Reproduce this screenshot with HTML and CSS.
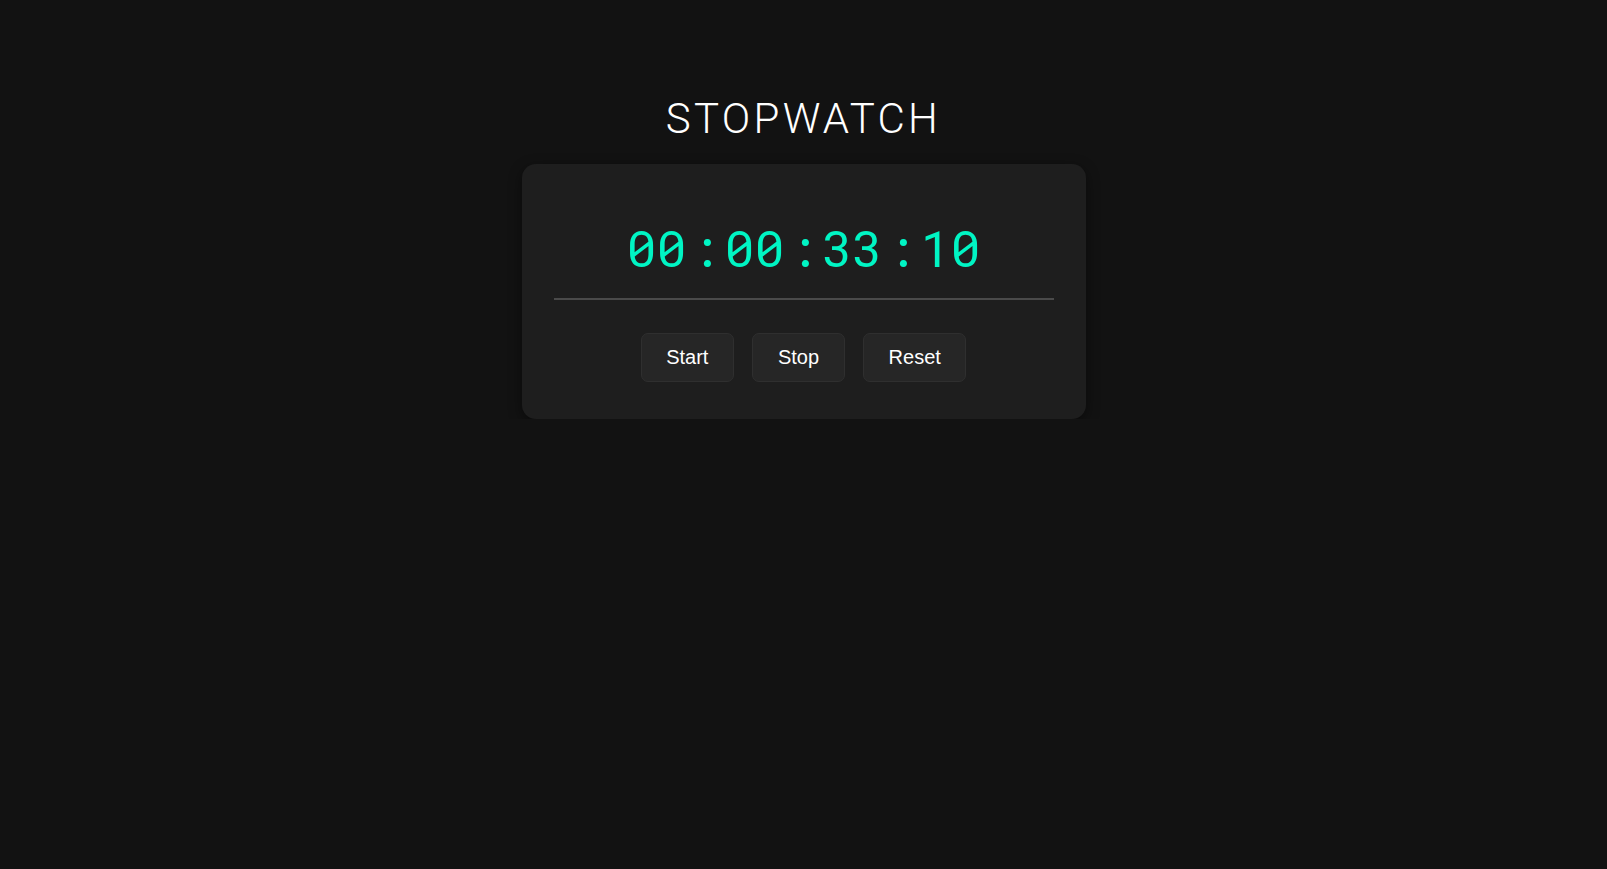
FILE: index.html
```html
<!DOCTYPE html>
<html lang="en">
<head>
<meta charset="utf-8">
<title>Stopwatch</title>
<link rel="stylesheet" href="styles.css">
</head>
<body>
<main class="page">
  <h1 class="title">STOPWATCH</h1>
  <section class="card">
    <div class="time">
      <span class="seg">00</span><span class="sep">:</span><span class="seg">00</span><span class="sep">:</span><span class="seg">33</span><span class="sep">:</span><span class="seg">10</span>
    </div>
    <hr class="divider">
    <div class="controls">
      <button class="btn">Start</button>
      <button class="btn">Stop</button>
      <button class="btn">Reset</button>
    </div>
  </section>
</main>
</body>
</html>
```

FILE: styles.css
```css
* { box-sizing: border-box; }
html, body { margin: 0; padding: 0; }
body {
  background: #121212;
  color: #fff;
  font-family: Roboto, "Liberation Sans", sans-serif;
}
.page {
  display: flex;
  flex-direction: column;
  align-items: center;
  padding-top: 94px;
}
.title {
  margin: 0 0 21px;
  font-family: Roboto, sans-serif;
  font-weight: 300;
  font-size: 42px;
  line-height: 49px;
  letter-spacing: 3.3px;
  color: #fff;
}
.card {
  width: 564px;
  padding: 32px 32px 37px;
  background: #1e1e1e;
  border-radius: 14px;
  box-shadow: 0 4px 14px rgba(0,0,0,0.45);
  display: flex;
  flex-direction: column;
  align-items: stretch;
}
.time {
  padding-top: 17px;
  text-align: center;
  font-family: "Roboto Mono", "DejaVu Sans Mono", monospace;
  font-size: 50px;
  line-height: 70px;
  color: #00f5c4;
}
.sep { margin: 0 4px; }
.divider {
  margin: 15px 0 33px;
  border: 0;
  height: 2px;
  background: #4a4a4a;
}
.controls {
  display: flex;
  justify-content: center;
  gap: 18.5px;
}
.btn {
  font-family: "Liberation Sans", Arial, sans-serif;
  font-size: 20px;
  line-height: 23px;
  padding: 12px 24.5px;
  color: #fff;
  background: #262626;
  border: 1px solid #2f2f2f;
  border-radius: 7px;
}
```
